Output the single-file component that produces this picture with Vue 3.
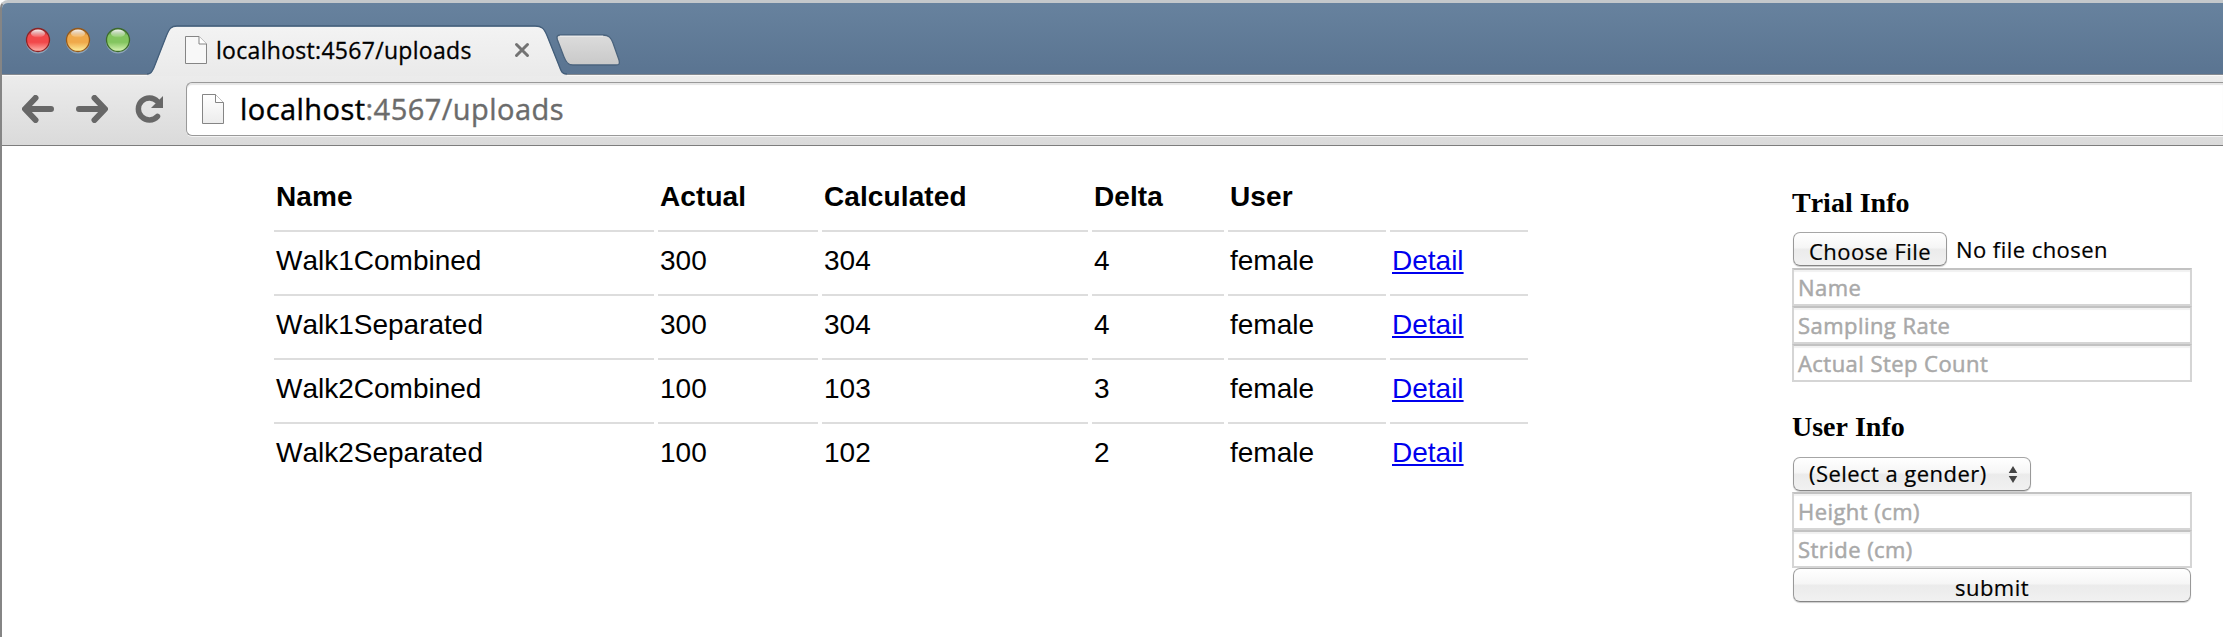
<script setup>
const lights = [
  { name: 'close', rim: '#8c2426', mid: '#f2484a', low: '#ffb9b0' },
  { name: 'minimize', rim: '#95591b', mid: '#f0a94a', low: '#fff3a0' },
  { name: 'zoom', rim: '#3c6b2c', mid: '#83c55f', low: '#ddf7b8' },
]
const columns = ['Name', 'Actual', 'Calculated', 'Delta', 'User', '']
const rows = [
  ['Walk1Combined', 300, 304, 4, 'female'],
  ['Walk1Separated', 300, 304, 4, 'female'],
  ['Walk2Combined', 100, 103, 3, 'female'],
  ['Walk2Separated', 100, 102, 2, 'female'],
]
</script>

<template>
  <div class="window">
    <div class="tabstrip">
      <div class="lights">
        <svg v-for="l in lights" :key="l.name" width="26" height="30" viewBox="0 0 26 30">
          <defs>
            <linearGradient :id="'g-' + l.name" x1="0" y1="0" x2="0" y2="1">
              <stop offset="0" :stop-color="l.rim" />
              <stop offset="0.3" :stop-color="l.mid" />
              <stop offset="0.6" :stop-color="l.mid" />
              <stop offset="1" :stop-color="l.low" />
            </linearGradient>
            <linearGradient :id="'s-' + l.name" x1="0" y1="0" x2="0" y2="1">
              <stop offset="0" stop-color="#fff" stop-opacity=".95" />
              <stop offset="1" stop-color="#fff" stop-opacity=".05" />
            </linearGradient>
          </defs>
          <circle cx="13" cy="14.6" r="12" fill="#9fb3c6" opacity=".75" />
          <circle cx="13" cy="13" r="11.500" :fill="`url(#g-${l.name})`" :stroke="l.rim" stroke-width="1.300" />
          <ellipse cx="13" cy="6.500" rx="7" ry="4" :fill="`url(#s-${l.name})`" />
        </svg>
      </div>
      <div class="tab">
        <svg class="tab-shape" width="424" height="51" viewBox="0 0 424 51">
          <defs>
            <linearGradient id="tabfill" x1="0" y1="0" x2="0" y2="1">
              <stop offset="0" stop-color="#f3f3f3" />
              <stop offset="1" stop-color="#eaeaea" />
            </linearGradient>
          </defs>
          <path d="M0 49.500C4 49.500 5 47 7 43L19.500 11C22.500 4 24 1.500 30 1.500H388C395 1.500 397 4 400 11L412 41C414.500 47.500 415 49.500 420 49.500V51H0Z" fill="url(#tabfill)" />
          <path d="M0 49C4 49 5 46.500 7 42.500L19.500 10.500C22.500 3.500 24 1 30 1H388C395 1 397 3.500 400 10.500L412 40.500C414.500 47 415 49 420 49" fill="none" stroke="#435e7a" stroke-width="1.300" />
        </svg>
        <svg class="tab-page" width="22" height="28" viewBox="0 0 22 28">
          <path d="M.5.5H14L21.500 8V27.500H.5Z" fill="#f8f8f8" stroke="#858585" />
          <path d="M14 .5V8H21.500" fill="#fff" stroke="#858585" />
        </svg>
        <span class="tab-title">localhost:4567/uploads</span>
        <svg class="tab-close" width="16" height="16" viewBox="0 0 16 16">
          <path d="M2.500 2.500L13.500 13.500M13.500 2.500L2.500 13.500" stroke="#737373" stroke-width="3" stroke-linecap="round" />
        </svg>
      </div>
      <svg class="new-tab" width="64" height="33" viewBox="0 0 64 33">
        <defs>
          <linearGradient id="newfill" x1="0" y1="0" x2="0" y2="1">
            <stop offset="0" stop-color="#dcdcdc" />
            <stop offset="1" stop-color="#c9c9c9" />
          </linearGradient>
        </defs>
        <path d="M4 1H47C53 1 55 4 57 9L63 26C64 30 63 31 60 31H17C12 31 10 28 8 23L1.500 6C.5 3 1 1 4 1Z" fill="url(#newfill)" stroke="#4a637d" stroke-width="1.300" />
        <path d="M4 2.200H47" stroke="#f0f0f0" />
      </svg>
    </div>

    <div class="toolbar">
      <svg class="nav back" width="32" height="28" viewBox="0 0 32 28">
        <path d="M13.500 3L3 14L13.500 25M3.500 14H29" />
      </svg>
      <svg class="nav forward" width="32" height="28" viewBox="0 0 32 28">
        <path d="M18.500 3L29 14L18.500 25M28.500 14H3" />
      </svg>
      <svg class="nav reload" width="30" height="28" viewBox="0 0 30 28">
        <path d="M22.500 6.500A11 11 0 1 0 22.500 21.300" />
        <path d="M28 1V13H16Z" class="solid" />
      </svg>
      <div class="address">
        <svg width="22" height="31" viewBox="0 0 22 31">
          <defs>
            <linearGradient id="pagefill" x1="0" y1="0" x2="0" y2="1">
              <stop offset="0" stop-color="#fff" />
              <stop offset="1" stop-color="#ececec" />
            </linearGradient>
          </defs>
          <path d="M.5.5H13.500L21.500 8.500V29.500H.5Z" fill="url(#pagefill)" stroke="#858585" />
          <path d="M13.500 .5V8.500H21.500" fill="#fff" stroke="#858585" />
        </svg>
        <span class="url">localhost<i>:4567/uploads</i></span>
      </div>
    </div>

    <div class="page">
      <div class="table">
        <div class="row head">
          <div v-for="c in columns" :key="c" class="cell">{{ c }}</div>
        </div>
        <div v-for="r in rows" :key="r[0]" class="row">
          <div v-for="(v, i) in r" :key="i" class="cell">{{ v }}</div>
          <div class="cell"><a href="#">Detail</a></div>
        </div>
      </div>

      <div class="forms">
        <h3>Trial Info</h3>
        <div class="file">
          <button class="btn choose"><span>Choose File</span></button>
          <span class="nofile">No file chosen</span>
        </div>
        <div class="field">Name</div>
        <div class="field">Sampling Rate</div>
        <div class="field">Actual Step Count</div>

        <h3 class="second">User Info</h3>
        <button class="btn select">
          <span>(Select a gender)</span>
          <svg width="10" height="17" viewBox="0 0 10 17"><path d="M5 0L9.300 7H.7ZM5 17L.7 10H9.300Z" fill="#444" /></svg>
        </button>
        <div class="field">Height (cm)</div>
        <div class="field">Stride (cm)</div>
        <button class="btn submit"><span>submit</span></button>
      </div>
    </div>
  </div>
</template>

<style>
body { margin: 0; background: #fff; overflow: hidden; }
</style>

<style scoped>
.window {
  box-sizing: border-box;
  width: 2223px;
  height: 637px;
  border-left: 2px solid #858585;
  border-top: 3px solid #c4c8cb;
  border-top-left-radius: 8px;
  overflow: hidden;
  font-family: "Open Sans", "Noto Sans", sans-serif;
  background: #fff;
}
.tabstrip {
  display: flex;
  align-items: flex-start;
  height: 71px;
  background: linear-gradient(#67829e, #5a7491);
  border-bottom: 1px solid #858a90;
}
.lights { display: flex; gap: 14px; margin: 24px 0 0 23px; width: 122px; }
.lights svg { flex: none; }
.tab {
  position: relative;
  display: flex;
  width: 424px;
  height: 51px;
  margin-top: 22px;
}
.tab-shape { position: absolute; left: 0; top: 0; }
.tab-page { position: relative; flex: none; margin: 11px 0 0 38px; }
.tab-title {
  position: relative;
  width: 298px;
  margin: 8px 0 0 9px;
  font-size: 23px;
  line-height: 34px;
  letter-spacing: 0.3px;
  -webkit-text-stroke: 0.3px #000;
  white-space: nowrap;
  color: #000;
}
.tab-close { position: relative; flex: none; margin-top: 17px; }
.new-tab { margin: 31px 0 0 -15px; position: relative; }
.toolbar {
  box-sizing: border-box;
  display: flex;
  height: 71px;
  background: linear-gradient(#ececec, #dadada);
  box-shadow: inset 0 1px #f8f8f8;
  border-bottom: 1px solid #7d7d7d;
}
.nav { flex: none; margin-top: 20px; fill: none; stroke: #676767; stroke-width: 6px; stroke-linecap: round; stroke-linejoin: round; }
.back { margin-left: 20px; }
.forward { margin-left: 22px; }
.reload { margin-left: 27px; stroke-width: 5.500px; }
.reload .solid { fill: #676767; stroke: none; }
.address {
  box-sizing: border-box;
  display: flex;
  flex: 1;
  height: 54px;
  margin: 7px 0 0 21px;
  border: 1px solid #999;
  border-right: 0;
  border-radius: 6px 0 0 6px;
  background: #fff;
  box-shadow: inset 0 2px 1px #e6e6e6, 0 1px #f3f3f3;
}
.address svg { margin: 11px 0 0 15px; flex: none; }
.url { margin-left: 16px; font-size: 29px; line-height: 52px; letter-spacing: 0.45px; white-space: nowrap; color: #000; -webkit-text-stroke: 0.4px currentColor; }
.url i { font-style: normal; color: #6b6b6b; }
.page { display: flex; }
.table {
  width: 1254px;
  margin: 22px 0 0 272px;
  font: 28px/32px "Liberation Sans", Arial, sans-serif;
  font-kerning: none;
  color: #000;
}
.row { display: grid; grid-template-columns: 380px 160px 266px 132px 158px 138px; column-gap: 4px; }
.cell { box-sizing: border-box; height: 64px; padding: 13px 2px 17px; border-bottom: 2px solid #ddd; white-space: nowrap; }
.row:last-child .cell { border-bottom: 0; }
.head { font-weight: bold; letter-spacing: 0.1px; }
.cell a { color: #0000ee; text-decoration: underline; text-decoration-thickness: 2px; text-underline-offset: 2px; }
.forms { width: 400px; margin: 41px 0 0 264px; letter-spacing: 0.45px; }
h3 { margin: 0; height: 45px; font: bold 28px/32px "Liberation Serif", "Times New Roman", serif; font-kerning: none; letter-spacing: 0; color: #000; }
.second { margin-top: 29px; height: 46px; }
.file { display: flex; height: 36px; }
.btn {
  box-sizing: border-box;
  display: flex;
  height: 34px;
  margin: 0 1px;
  padding: 0 0 0 15px;
  border: 1px solid #999;
  border-color: #a6a6a6 #999 #858585;
  border-radius: 7px;
  background: linear-gradient(#fff 0%, #f6f6f6 45%, #ebebeb 52%, #f1f1f1 100%);
  box-shadow: 0 1px 1px rgba(0, 0, 0, 0.2);
  font: 22px/32px "Open Sans", "Noto Sans", sans-serif;
  letter-spacing: 0.45px;
  color: #000;
  white-space: nowrap;
  -webkit-text-stroke: 0.2px #000;
}
.choose { width: 154px; line-height: 37px; margin-right: 9px; }
.nofile { font-size: 22px; line-height: 34px; white-space: nowrap; -webkit-text-stroke: 0.2px #000; }
.select { width: 238px; height: 34px; margin-bottom: 1px; line-height: 31px; }
.select span { width: 199px; text-align: left; }
.select svg { margin-top: 8px; }
.submit { width: 398px; padding: 0; justify-content: center; line-height: 36px; }
.field {
  box-sizing: border-box;
  height: 38px;
  padding-left: 4px;
  border: 2px solid #d5d5d5;
  border-top-color: #c2c2c2;
  box-shadow: inset 0 2px 1px #f1f1f1;
  font-size: 22px;
  line-height: 34px;
  color: #a9a9a9;
  -webkit-text-stroke: 0.5px #a9a9a9;
  white-space: nowrap;
}
</style>
